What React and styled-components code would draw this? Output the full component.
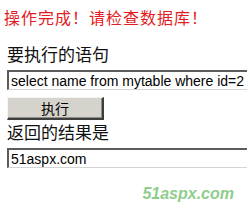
import React from "react";
import styled, { createGlobalStyle } from "styled-components";

const Global = createGlobalStyle`
  html, body { margin: 0; padding: 0; background: #fff; overflow: hidden; }
  body { font-family: "Liberation Sans", Arial, "Noto Sans CJK SC", sans-serif; }
`;

const Page = styled.div`
  width: 247px;
  height: 222px;
  overflow: hidden;
  display: flex;
  flex-direction: column;
  align-items: flex-start;
`;

const cjk = `"Noto Sans CJK SC", "Liberation Sans", sans-serif`;

const Message = styled.div`
  margin: 7px 0 0 4px;
  font-family: ${cjk};
  font-size: 16px;
  letter-spacing: 1px;
  line-height: 20px;
  color: #e31b23;
  white-space: nowrap;
`;

const Label = styled.div`
  margin: ${(p) => p.$top}px 0 0 7px;
  font-family: ${cjk};
  font-size: 17px;
  line-height: 20px;
  color: #111;
  white-space: nowrap;
`;

const Field = styled.input`
  box-sizing: border-box;
  flex: none;
  margin: ${(p) => p.$top}px 0 0 7px;
  width: 330px;
  height: 20px;
  padding: 0 0 0 2px;
  font-family: "Liberation Sans", Arial, sans-serif;
  font-size: 14px;
  color: #000;
  background: #fff;
  border-style: solid;
  border-width: 2px 1px 1px 2px;
  border-color: #5c5c5c #d4d4d4 #d4d4d4 #5c5c5c;
  outline: none;
`;

const Button = styled.button`
  box-sizing: border-box;
  margin: 7px 0 0 7px;
  width: 97px;
  height: 23px;
  padding: 0;
  font-family: ${cjk};
  font-size: 14px;
  line-height: 1;
  color: #000;
  background: #d6d3cc;
  border-style: solid;
  border-width: 1px 2px 2px 1px;
  border-color: #f4f4f2 #3e3e3e #3e3e3e #f4f4f2;
  box-shadow: inset -1px -1px 0 #8e8c88;
`;

const Watermark = styled.div`
  align-self: stretch;
  display: flex;
  justify-content: flex-end;
  margin-top: 17px;
  padding-right: 13px;
  font-family: "Liberation Sans", Arial, sans-serif;
  font-size: 16px;
  line-height: 18px;
  font-weight: bold;
  font-style: italic;
  color: #8fcd8c;
`;

export default function App() {
  return (
    <Page>
      <Global />
      <Message>操作完成！请检查数据库！</Message>
      <Label $top={17}>要执行的语句</Label>
      <Field $top={6} defaultValue="select name from mytable where id=2" readOnly />
      <Button>执行</Button>
      <Label $top={2}>返回的结果是</Label>
      <Field $top={6} defaultValue="51aspx.com" readOnly />
      <Watermark>51aspx.com</Watermark>
    </Page>
  );
}
